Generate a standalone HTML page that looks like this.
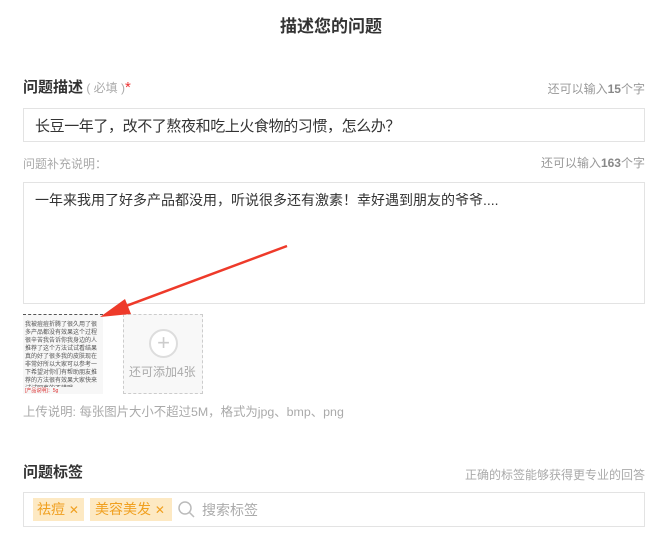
<!DOCTYPE html>
<html><head><meta charset="utf-8"><style>
*{margin:0;padding:0;box-sizing:border-box}
body{width:662px;height:534px;background:#fff;font-family:"Liberation Sans","Noto Sans CJK SC",sans-serif;position:relative;overflow:hidden;color:#333}
.a{position:absolute;white-space:nowrap}
.box{position:absolute;border:1px solid #e3e3e3;background:#fff}
.g{color:#999}
</style></head><body>
<div class="a" style="left:0;width:662px;text-align:center;top:12px;font-size:17px;font-weight:bold;color:#333">描述您的问题</div>
<div class="a" style="left:23px;top:76px;font-size:15px;font-weight:bold">问题描述<span style="font-weight:normal;font-size:12px;color:#aaa"> ( 必填 )</span><span style="color:#e33;font-weight:normal">*</span></div>
<div class="a g" style="right:17px;top:80px;font-size:12px">还可以输入<b style="color:#888">15</b>个字</div>
<div class="box" style="left:23px;top:108px;width:622px;height:34px"></div>
<div class="a" style="left:35px;top:116px;font-size:15px;color:#333;font-family:'Noto Sans CJK SC',sans-serif;line-height:20px;letter-spacing:-0.4px">长豆一年了，改不了熬夜和吃上火食物的习惯，怎么办？</div>
<div class="a" style="left:23px;top:155px;font-size:12px;color:#aaa">问题补充说明：</div>
<div class="a g" style="right:17px;top:154px;font-size:12px">还可以输入<b style="color:#888">163</b>个字</div>
<div class="box" style="left:23px;top:182px;width:622px;height:122px"></div>
<div class="a" style="left:35px;top:190px;font-size:14px;color:#333">一年来我用了好多产品都没用，听说很多还有激素！幸好遇到朋友的爷爷....</div>
<div class="a" style="left:23px;top:314px;width:80px;height:80px;background:#f7f7f7;overflow:hidden;border-top:1px dashed #555">
<div style="font-size:6px;line-height:8px;color:#555;padding:6px 2px;white-space:normal;word-break:break-all">我被痘痘折腾了很久用了很多产品都没有效果这个过程很辛苦我告诉你我身边的人推荐了这个方法试试看结果真的好了很多我的皮肤现在非常好所以大家可以参考一下希望对你们有帮助朋友推荐的方法很有效果大家快来试试吧真的不错哦</div>
<div style="position:absolute;left:2px;top:72px;font-size:5px;color:#d33;background:#f7f7f7;width:80px">[产品说明]：5g</div></div>
<div class="a" style="left:123px;top:314px;width:80px;height:80px;border:1px dashed #ccc;background:#f8f8f8"></div>
<div class="a" style="left:149px;top:329px;width:29px;height:29px;border:2px solid #ddd;border-radius:50%;background:#fff;text-align:center;line-height:24px;font-size:22px;color:#ccc">+</div>
<div class="a" style="left:129px;top:363px;font-size:12px;color:#aaa">还可添加4张</div>
<svg class="a" style="left:0;top:0" width="662" height="534"><line x1="287" y1="246" x2="118" y2="309" stroke="#ee3a2a" stroke-width="2.5"/><polygon points="100,317 125,299 131,314" fill="#ee3a2a"/></svg>
<div class="a" style="left:23px;top:402px;font-size:12.4px;color:#aaa">上传说明: 每张图片大小不超过5M，格式为jpg、bmp、png</div>
<div class="a" style="left:23px;top:461px;font-size:15px;font-weight:bold">问题标签</div>
<div class="a" style="right:17px;top:466px;font-size:12px;color:#aaa">正确的标签能够获得更专业的回答</div>
<div class="box" style="left:23px;top:492px;width:622px;height:35px"></div>
<div class="a" style="left:33px;top:498px;width:51px;height:23px;background:#fde9c3;color:#f0a020;font-size:14px;line-height:23px;padding-left:4px">祛痘 <span style="font-size:12px">✕</span></div>
<div class="a" style="left:90px;top:498px;width:82px;height:23px;background:#fde9c3;color:#f0a020;font-size:14px;line-height:23px;padding-left:5px">美容美发 <span style="font-size:12px">✕</span></div>
<svg class="a" style="left:177px;top:500px" width="20" height="20"><circle cx="8" cy="8" r="6" stroke="#bbb" stroke-width="1.5" fill="none"/><line x1="12.5" y1="12.5" x2="17" y2="17" stroke="#bbb" stroke-width="1.5"/></svg>
<div class="a" style="left:202px;top:500px;font-size:14px;color:#aaa">搜索标签</div>
</body></html>
